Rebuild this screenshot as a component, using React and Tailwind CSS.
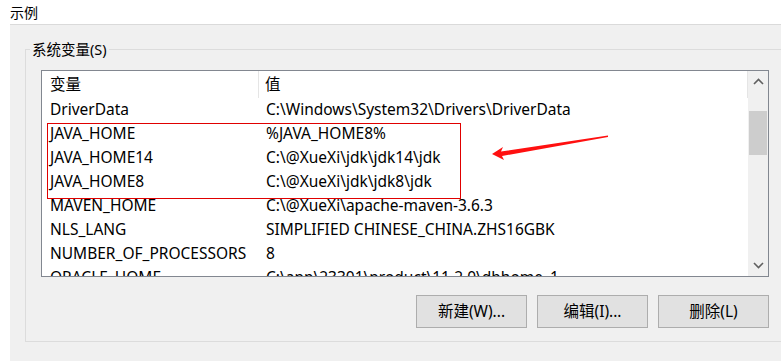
import React from 'react';

const rows = [
    ['DriverData', 'C:\\Windows\\System32\\Drivers\\DriverData'],
    ['JAVA_HOME', '%JAVA_HOME8%'],
    ['JAVA_HOME14', 'C:\\@XueXi\\jdk\\jdk14\\jdk'],
    ['JAVA_HOME8', 'C:\\@XueXi\\jdk\\jdk8\\jdk'],
    ['MAVEN_HOME', 'C:\\@XueXi\\apache-maven-3.6.3'],
    ['NLS_LANG', 'SIMPLIFIED CHINESE_CHINA.ZHS16GBK'],
    ['NUMBER_OF_PROCESSORS', '8'],
    ['ORACLE_HOME', 'C:\\app\\23301\\product\\11.2.0\\dbhome_1'],
];

const font = { fontFamily: '"Segoe UI", "Noto Sans", "Noto Sans CJK SC", sans-serif' };

function Chevron({ up }) {
    return (
        <svg width="11" height="7" viewBox="0 0 11 7">
            <path d={up ? 'M1 6 L5.5 1.5 L10 6' : 'M1 1 L5.5 5.5 L10 1'} fill="none" stroke="#606060" strokeWidth="1.6" />
        </svg>
    );
}

function WinButton({ children }) {
    return (
        <button className="w-[111px] h-[33px] bg-[#e1e1e1] border border-[#adadad] text-[15.5px] text-black flex items-center justify-center">
            {children}
        </button>
    );
}

export default function App() {
    return (
        <div className="w-[781px] h-[361px] bg-white overflow-hidden flex flex-col" style={font}>
            {/* title */}
            <div className="h-[24px] pl-[10px] flex items-center text-[14px] text-black">示例</div>

            <div className="flex-1 ml-[10px] bg-[#f0f0f0] border-t border-[#dadada] pl-[15px] pt-[15px]">
                <fieldset className="border border-[#dcdcdc] h-[302px] w-[800px] pl-[15px] pt-[8px]">
                    <legend className="-ml-[11px] px-[2px] text-[14.5px] text-black leading-[18px]">系统变量(S)</legend>

                    {/* list view */}
                    <div className="relative w-[728px] h-[207px] border border-[#828790] bg-white flex overflow-hidden mt-[4px]">
                        <div className="flex-1 flex flex-col overflow-hidden text-[15.5px] text-black">
                            <div className="h-[27px] shrink-0 flex items-center">
                                <div className="w-[217px] h-full pl-[8px] flex items-center border-r border-[#e5e5e5]">变量</div>
                                <div className="flex-1 h-full pl-[6px] flex items-center border-r border-[#e5e5e5]">值</div>
                            </div>
                            {rows.map(([name, value]) => (
                                <div key={name} className="h-[24px] shrink-0 flex items-center whitespace-nowrap">
                                    <div className="w-[217px] pl-[8px]">{name}</div>
                                    <div className="flex-1 pl-[7px]">{value}</div>
                                </div>
                            ))}
                        </div>

                        {/* scrollbar */}
                        <div className="w-[20px] bg-[#f0f0f0] flex flex-col">
                            <div className="h-[21px] flex items-center justify-center pb-[1px]"><Chevron up /></div>
                            <div className="flex-1 pt-[19px] px-px">
                                <div className="h-[44px] bg-[#cdcdcd]"></div>
                            </div>
                            <div className="h-[21px] flex items-center justify-center"><Chevron /></div>
                        </div>

                        {/* red highlight box and arrow */}
                        <div className="absolute left-[5px] top-[52px] w-[414px] h-[76px] border border-[#e00000]"></div>
                        <svg className="absolute left-[440px] top-[56px]" width="130" height="40" viewBox="0 0 130 40">
                            <polygon points="10,27 21,20 19,24.5 126,8.5 126,10 20,29 22,33" fill="#ff1010" />
                        </svg>
                    </div>

                    {/* buttons */}
                    <div className="w-[728px] flex justify-end gap-[10px] mt-[18px]">
                        <WinButton>新建(W)...</WinButton>
                        <WinButton>编辑(I)...</WinButton>
                        <WinButton>删除(L)</WinButton>
                    </div>
                </fieldset>
            </div>
        </div>
    );
}
